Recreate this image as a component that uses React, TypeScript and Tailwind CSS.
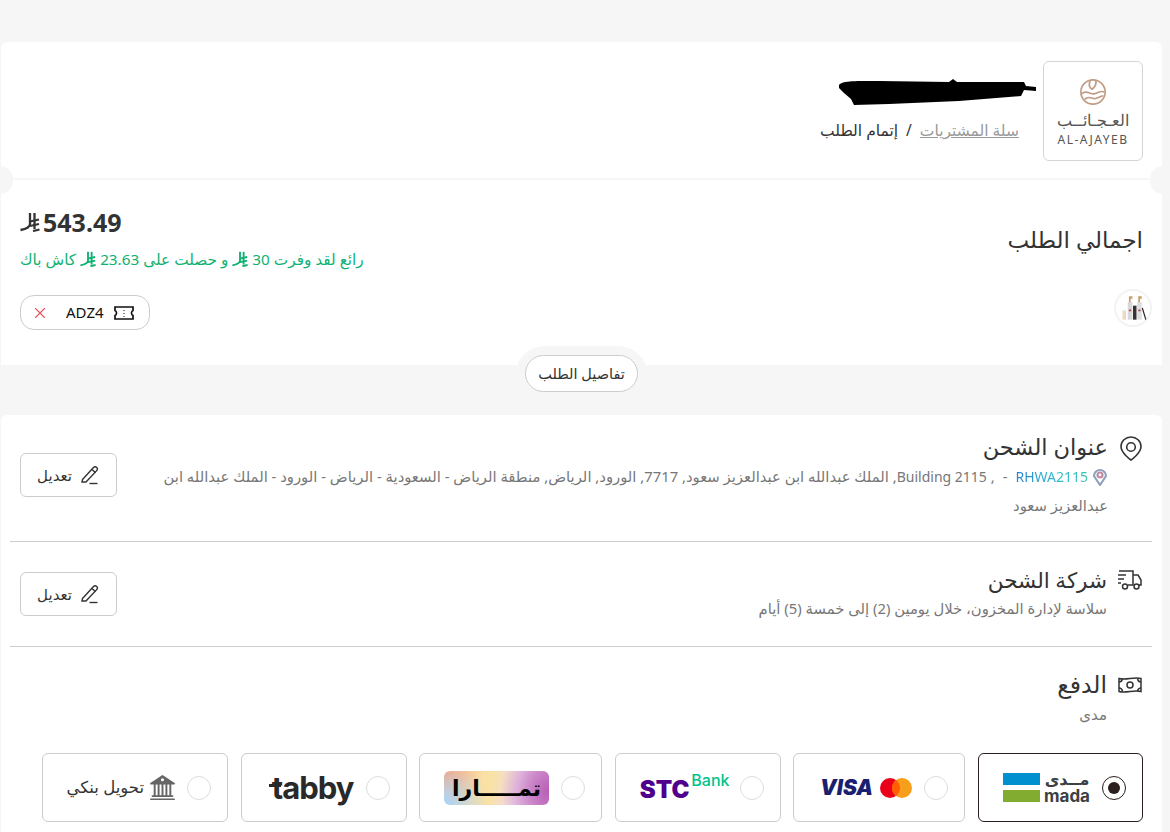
import React from "react";
import { BsBank2 } from "react-icons/bs";
import { X } from "lucide-react";

const Sar = ({ className }: { className: string }) => (
  <svg viewBox="0 0 20 20" className={className} fill="none" stroke="currentColor" strokeWidth="2.3">
    <path d="M10 1v11c0 3-4 5-9.500 6" />
    <path d="M14.500 1v16" />
    <path d="M10 9.500l9-2" />
    <path d="M10 14l9-2" />
    <path d="M13 19l6.500-1.500" />
  </svg>
);

const Pencil = () => (
  <svg viewBox="0 0 20 20" className="w-5 h-5" fill="none" stroke="#333" strokeWidth="1.400">
    <path d="M2.500 14.500L13.500 2.500c1-1 2.300-1 3.200-.1s.9 2.200 0 3.200L6 17H2z" />
    <path d="M12 4.500l3.500 3.200" />
    <path d="M9.500 18.500h8" />
  </svg>
);

const EditButton = () => (
  <button className="w-[97px] h-11 shrink-0 border border-[#cccccc] rounded-md flex items-center justify-center gap-2 text-[15px] text-[#333] bg-white">
    <Pencil />
    <span>تعديل</span>
  </button>
);

const Radio = ({ on }: { on?: boolean }) =>
  on ? (
    <span className="w-6 h-6 rounded-full border border-[#2a1f1c] flex items-center justify-center shrink-0">
      <span className="w-3 h-3 rounded-full bg-[#2a1f1c]" />
    </span>
  ) : (
    <span className="w-6 h-6 rounded-full border border-[#dddddd] shrink-0" />
  );

const Option = ({ w, on, children }: { w: string; on?: boolean; children: React.ReactNode }) => (
  <div className={`${w} h-[69px] shrink-0 rounded-md border pr-[16px] ${on ? "border-[#2a1f1c]" : "border-[#cccccc]"} flex items-center gap-3 bg-white`}>
    <Radio on={on} />
    {children}
  </div>
);

export default function App() {
  return (
    <div dir="rtl" className="h-[832px] overflow-hidden bg-[#f6f6f6] pt-[42px] pl-px pr-2 font-['Noto_Sans','DejaVu_Sans',sans-serif] text-[#333]">
      {/* summary card */}
      <div className="relative bg-white rounded-t-md h-[323px]">
        <header className="h-[138px] border-b-2 border-[#f6f6f6] flex items-start gap-6 pr-[19px] pt-[19px]">
          <div className="w-[100px] h-[100px] rounded-md border border-[#d5d5d5] flex flex-col items-center pt-[16px]">
            <svg viewBox="0 0 30 30" className="w-7 h-7" fill="none" stroke="#c09c84" strokeWidth="1.800">
              <circle cx="15" cy="15" r="13" />
              <path d="M3 17c5-5 9 1 13 0s8-4 11-2" />
              <path d="M6 23c5-5 8 0 12-1s6-3 8-3" />
              <path d="M12 3c-2 4-1 7 2 9 3-2 5-6 4-9" />
            </svg>
            <span className="text-[16px] leading-[18px] font-light text-[#555] mt-[5px]">العـجـائــب</span>
            <span dir="ltr" className="text-[12px] leading-[14px] tracking-[1.500px] text-[#555] mt-[4px]">AL-AJAYEB</span>
          </div>
          <div className="pt-[18px]">
            <svg viewBox="0 0 197 26" className="w-[197px] h-[26px] -mr-[17px]">
              <path d="M0 6C3 2 12 2 40 2L110 3L114 0L118 3L185 3L187 7L197 8L197 12L185 11L182 17L120 22L50 25L15 26L12 20L5 14L0 9Z" fill="#000" />
            </svg>
            <div className="flex items-center gap-2 text-[15.500px] leading-5 mt-[15px] whitespace-nowrap">
              <span className="text-[#9a9a9a] underline">سلة المشتريات</span>
              <span>/</span>
              <span>إتمام الطلب</span>
            </div>
          </div>
        </header>

        <span className="absolute -left-px top-[124px] w-[13px] h-[28px] rounded-r-full bg-[#f6f6f6]" />
        <span className="absolute -right-px top-[124px] w-[13px] h-[28px] rounded-l-full bg-[#f6f6f6]" />

        <section className="flex justify-between pr-[19px] pl-[19px] pt-[28px]">
          <h2 className="text-[23px] leading-7 font-medium pt-[17px]">اجمالي الطلب</h2>
          <div className="flex flex-col items-start" dir="ltr">
            <div className="flex items-center gap-[3px] text-[25px] leading-7 font-bold">
              <Sar className="w-[20px] h-[20px]" />
              <span>543.49</span>
            </div>
            <div dir="rtl" className="flex items-center gap-1 text-[#0fb171] text-[15.300px] leading-5 mt-[13px]">
              <span>رائع لقد وفرت 30</span>
              <Sar className="w-4 h-4" />
              <span>و حصلت على 23.63</span>
              <Sar className="w-4 h-4" />
              <span>كاش باك</span>
            </div>
          </div>
        </section>

        <div className="flex justify-between items-start pr-[10px] pl-[19px] mt-[20px]">
          <div className="w-[38px] h-[38px] rounded-full border-2 border-[#f3f3f3] flex items-center justify-center">
            <svg viewBox="0 0 24 24" className="w-7 h-7">
              <rect x="3" y="14" width="3" height="8" fill="#e9dcc0" />
              <rect x="7.500" y="7" width="4" height="15" fill="#d8d8dc" />
              <rect x="12" y="10" width="3" height="12" fill="#333" />
              <rect x="15.500" y="7" width="4" height="15" fill="#dedede" />
              <path d="M8.500 2h3v2h-1.500v3h-1.500zM16.500 2h3v2H18v3h-1.500z" fill="#c99e6d" />
              <circle cx="9.500" cy="14" r="1" fill="#b5545c" />
              <circle cx="17.500" cy="14" r="1" fill="#b5545c" />
              <path d="M20 12l3 10" stroke="#222" />
            </svg>
          </div>
          <div dir="ltr" className="w-[130px] h-[35px] mt-[6px] rounded-[14px] border border-[#cccccc] flex items-center pl-[10px] text-[15px] text-[#111]">
            <X className="w-[18px] h-[18px] text-[#f0525a]" strokeWidth={1.500} />
            <span className="ml-[17px]">ADZ4</span>
            <svg viewBox="0 0 20 14" className="w-5 h-3.5 ml-[10px]" fill="none" stroke="#111" strokeWidth="1.700">
              <path d="M1 1h18v3.500c-2 .6-2 4.400 0 5v3.500H1V9.500c2-.6 2-4.400 0-5z" />
              <path d="M10 4v1M10 7v1M10 10v1" strokeWidth="1" />
            </svg>
          </div>
        </div>
      </div>

      {/* details toggle */}
      <div className="relative h-[50px]">
        <span className="absolute right-[514px] -top-[19px] w-[133px] h-[40px] rounded-t-[30px] bg-[#f6f6f6]" />
        <button className="absolute right-[524px] -top-[10px] w-[113px] h-[37px] rounded-full border border-[#cccccc] bg-white text-[14.500px] text-[#333]">
          تفاصيل الطلب
        </button>
      </div>

      {/* checkout card */}
      <div className="bg-white rounded-t-md h-[420px]">
        <section className="h-[127px] ml-[9px] mr-[10px] border-b border-[#cccccc] flex items-start justify-between pr-[9px] pl-[10px] pt-[18px]">
          <div className="flex items-start gap-[11px]">
            <svg viewBox="0 0 24 26" className="w-[24px] h-[26px] mt-[3px]" fill="none" stroke="#333" strokeWidth="1.600">
              <path d="M12 24C12 24 2 17 2 10.500a10 9.500 0 0120 0C22 17 12 24 12 24z" />
              <circle cx="12" cy="11" r="4.300" />
            </svg>
            <div className="w-[944px]">
              <h3 className="text-[22.500px] leading-7 font-medium">عنوان الشحن</h3>
              <p className="text-[14.800px] leading-[28px] text-[#777] mt-[1px] whitespace-nowrap">
                <svg viewBox="0 0 16 18" className="inline-block w-4 h-[18px] ml-1 align-[-4px]" fill="none" strokeWidth="2.200">
                  <path d="M8 17L2 8a6 6 0 1112 0z" stroke="#8fa3c0" />
                  <circle cx="8" cy="7" r="2.500" stroke="#c08aa0" />
                </svg>
                <span dir="ltr" className="text-[14px] text-transparent bg-clip-text bg-[linear-gradient(90deg,#2a7fd0,#2bb8d0,#33c5b0)]">RHWA2115</span>
                <span className="mx-2">-</span>
                <span>, <span className="text-[14px]">Building 2115</span>, الملك عبدالله ابن عبدالعزيز سعود, 7717, الورود, الرياض, منطقة الرياض - السعودية - الرياض - الورود - الملك عبدالله ابن</span>
              </p>
              <p className="text-[14.800px] leading-[28px] text-[#777]">عبدالعزيز سعود</p>
            </div>
          </div>
          <div className="mt-[20px]"><EditButton /></div>
        </section>

        <section className="h-[105px] ml-[9px] mr-[10px] border-b border-[#cccccc] flex items-start justify-between pr-[9px] pl-[10px] pt-[24px]">
          <div className="flex items-start gap-2.5">
            <svg viewBox="0 0 26 22" className="w-[26px] h-[22px] mt-[3px]" fill="none" stroke="#333" strokeWidth="1.500">
              <path d="M2 2h14v14h-5" />
              <path d="M16 6h5l3 5v5h-2" />
              <circle cx="8" cy="17.500" r="2.500" />
              <circle cx="19.500" cy="17.500" r="2.500" />
              <path d="M1 6h8M1 10h6M1 14h3" />
            </svg>
            <div>
              <h3 className="text-[21.500px] leading-7 font-medium">شركة الشحن</h3>
              <p className="text-[14.800px] leading-5 text-[#777] mt-[4px]">سلاسة لإدارة المخزون، خلال يومين (2) إلى خمسة (5) أيام</p>
            </div>
          </div>
          <div className="mt-[6px]"><EditButton /></div>
        </section>

        <section className="ml-[9px] mr-[10px] pr-[9px] pt-[23px]">
          <div className="flex items-start gap-2.5">
            <svg viewBox="0 0 26 20" className="w-[26px] h-[20px] mt-[5px]" fill="none" stroke="#333" strokeWidth="1.500">
              <path d="M2 3.500c7 2 15-2 22 0v13c-7-2-15 2-22 0z" />
              <circle cx="13" cy="10" r="3" />
              <path d="M2 7c2 0 3-1 3.500-3M24 13c-2 0-3 1-3.500 3M2 13c2 0 3 1 3.500 3M24 7c-2 0-3-1-3.500-3" />
            </svg>
            <div>
              <h3 className="text-[23.500px] leading-7 font-medium">الدفع</h3>
              <p className="text-[15px] leading-5 text-[#777] mt-[6px]">مدى</p>
            </div>
          </div>
          <div className="flex gap-[12.500px] mt-[29px]">
            <Option w="w-[165.500px]" on>
              <div className="flex flex-col items-start gap-[5px]" dir="ltr">
                <div className="flex items-center gap-1">
                  <span className="w-[37px] h-3 bg-[#0090d0]" />
                  <span className="w-[46px] text-center text-[16px] leading-3 font-bold text-[#3c3f44]">مــدى</span>
                </div>
                <div className="flex items-center gap-1">
                  <span className="w-[37px] h-3 bg-[#82ac30]" />
                  <span className="text-[17px] leading-3 font-bold text-[#3c3f44] font-['Inter',sans-serif]">mada</span>
                </div>
              </div>
            </Option>
            <Option w="w-[172px]">
              <div dir="ltr" className="flex items-center gap-[7px]">
                <span className="text-[21px] leading-6 font-black italic text-[#1a1f71] font-['Inter',sans-serif]">VISA</span>
                <svg viewBox="0 0 32 20" className="w-8 h-5">
                  <circle cx="10" cy="10" r="10" fill="#eb001b" />
                  <circle cx="22" cy="10" r="10" fill="#f79e1b" />
                  <path d="M16 2a10 10 0 010 16 10 10 0 010-16z" fill="#ff5f00" />
                </svg>
              </div>
            </Option>
            <Option w="w-[166px]">
              <div dir="ltr" className="flex items-start -mr-[2px] font-['Inter',sans-serif]">
                <span className="text-[24px] leading-7 mt-[4px] font-black text-[#4f008c]">STC</span>
                <span className="text-[16px] leading-4 ml-[2px] font-medium text-[#00c48c]">Bank</span>
              </div>
            </Option>
            <Option w="w-[183px]">
              <div className="w-[105px] h-[34px] rounded-md flex items-center justify-center text-[22px] font-bold text-black bg-[radial-gradient(circle_at_0%_100%,#a5d4fb_0%,transparent_40%),radial-gradient(circle_at_0%_0%,#ff9d75_0%,transparent_35%),radial-gradient(circle_at_100%_60%,#b85fb5_0%,transparent_45%),linear-gradient(100deg,#fbd9a8_0%,#f9e2a5_45%,#efd7ee_70%,#d9a0d8_100%)]">
                تمـــــارا
              </div>
            </Option>
            <Option w="w-[166px]">
              <span dir="ltr" className="relative text-[31px] leading-8 font-bold tracking-[-1px] text-[#292929] font-['Inter',sans-serif]">
                tabby
                <span className="absolute -left-[3px] top-[12px] w-[12px] h-[3px] bg-[#292929]" />
              </span>
            </Option>
            <Option w="w-[186px]">
              <div className="flex items-center gap-1.5">
                <BsBank2 className="w-[25px] h-[25px] text-[#666]" />
                <span className="text-[16.500px] text-[#333]">تحويل بنكي</span>
              </div>
            </Option>
          </div>
        </section>
      </div>
    </div>
  );
}
